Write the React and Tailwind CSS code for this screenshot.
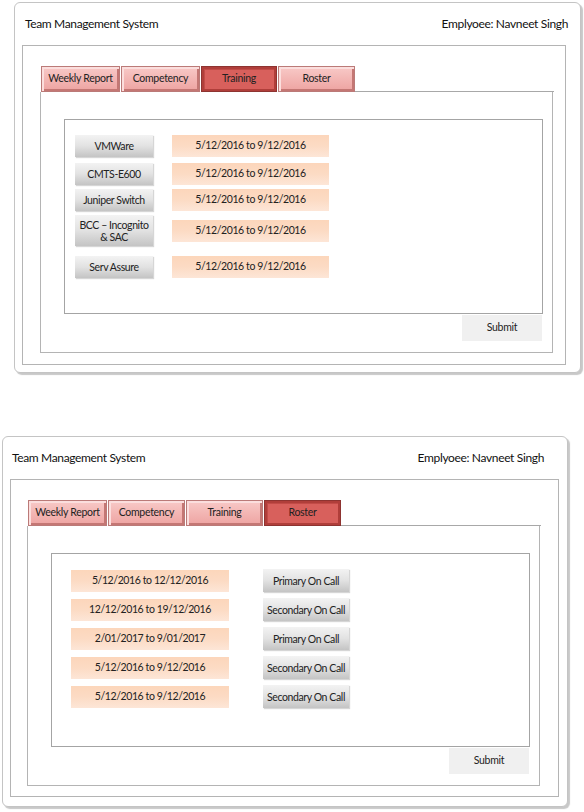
import React from 'react';

const TABS = ['Weekly Report', 'Competency', 'Training', 'Roster'];

const TRAINING = [
  { name: 'VMWare', dates: '5/12/2016 to 9/12/2016', mt: 'mt-[15px]', tall: false },
  { name: 'CMTS-E600', dates: '5/12/2016 to 9/12/2016', mt: 'mt-[6px]', tall: false },
  { name: 'Juniper Switch', dates: '5/12/2016 to 9/12/2016', mt: 'mt-[4px]', tall: false },
  { name: 'BCC – Incognito & SAC', dates: '5/12/2016 to 9/12/2016', mt: 'mt-[4px]', tall: true },
  { name: 'Serv Assure', dates: '5/12/2016 to 9/12/2016', mt: 'mt-[10px]', tall: false },
];

const ROSTER = [
  { dates: '5/12/2016 to 12/12/2016', role: 'Primary On Call' },
  { dates: '12/12/2016 to 19/12/2016', role: 'Secondary On Call' },
  { dates: '2/01/2017 to 9/01/2017', role: 'Primary On Call' },
  { dates: '5/12/2016 to 9/12/2016', role: 'Secondary On Call' },
  { dates: '5/12/2016 to 9/12/2016', role: 'Secondary On Call' },
];

const Tab = ({ label, active, width }) => (
  <div
    className={
      active
        ? `${width} h-[26px] flex items-center justify-center text-[10.5px] tracking-[-0.3px] text-[#222] border border-[#8e3431] bg-[#d8605c] shadow-[inset_0_0_0_2px_#b03e3a,inset_3px_3px_0_#c24b47]`
        : `${width} h-[26px] flex items-center justify-center text-[10.5px] tracking-[-0.3px] text-[#222] border border-[#bb7a78] bg-gradient-to-b from-[#f8c9c7] to-[#eda3a1] shadow-[inset_2px_2px_0_#fbdedd,inset_-2px_-2px_0_#c47774]`
    }
  >
    {label}
  </div>
);

const GrayBtn = ({ children, className }) => (
  <div
    className={`flex items-center justify-center text-center leading-[12px] text-[10.5px] tracking-[-0.4px] text-[#222] bg-gradient-to-b from-[#f3f3f3] via-[#e2e2e2] to-[#c4c4c4] shadow-[1px_1px_1px_#d6d6d6] ${className}`}
  >
    {children}
  </div>
);

const PeachBox = ({ children, className }) => (
  <div
    className={`flex items-center justify-center text-[10.5px] tracking-[-0.4px] text-[#222] bg-gradient-to-b from-[#fcd6bb] via-[#fcdbc4] to-[#fde6d7] ${className}`}
  >
    {children}
  </div>
);

const Header = ({ pl, pr }) => (
  <div className={`h-[42px] flex items-center justify-between text-[12px] tracking-[-0.35px] text-[#111] ${pl} ${pr}`}>
    <span>Team Management System</span>
    <span>Emplyoee: Navneet Singh</span>
  </div>
);

const Submit = () => (
  <div className="w-[80px] h-[26px] flex items-center justify-center bg-[#f0f0f0] text-[10.5px] tracking-[-0.3px] text-[#222]">
    Submit
  </div>
);

const TabRow = ({ active, widths }) => (
  <div className="flex items-end w-[514px]">
    <div className="flex gap-[1px] pl-[1px]">
      {TABS.map((t, i) => (
        <Tab key={t} label={t} active={t === active} width={widths[i]} />
      ))}
    </div>
    <div className="flex-1 border-b border-[#a8a8a8]" />
  </div>
);

const TrainingCard = () => (
  <div className="ml-[14px] mt-[2px] w-[567px] h-[371px] border border-[#c4c4c4] rounded-[6px] shadow-[2px_2px_1px_#c8c8c8] bg-white flex flex-col">
    <Header pl="pl-[10px]" pr="pr-[12px]" />
    <div className="ml-[7px] w-[544px] h-[320px] border border-[#b4b4b4] pt-[20px] pl-[17px]">
      <TabRow active="Training" widths={['w-[79px]', 'w-[79px]', 'w-[76px]', 'w-[77px]']} />
      <div className="w-[513px] h-[261px] border border-[#b4b4b4] border-t-0 pt-[27px] pl-[23px] flex flex-col">
        <div className="w-[479px] h-[195px] border border-[#a4a4a4] pl-[10px]">
          {TRAINING.map((r) => (
            <div key={r.name} className={`flex items-center gap-[19px] ${r.mt}`}>
              <GrayBtn className={r.tall ? 'w-[78px] h-[31px] px-[2px]' : 'w-[78px] h-[22px]'}>{r.name}</GrayBtn>
              <PeachBox className="w-[157px] h-[22px]">{r.dates}</PeachBox>
            </div>
          ))}
        </div>
        <div className="flex justify-end pr-[10px] mt-[1px]">
          <Submit />
        </div>
      </div>
    </div>
  </div>
);

const RosterCard = () => (
  <div className="ml-[2px] mt-[63px] w-[566px] h-[371px] border border-[#c4c4c4] rounded-[6px] shadow-[2px_2px_1px_#c8c8c8] bg-white flex flex-col">
    <Header pl="pl-[9px]" pr="pr-[23px]" />
    <div className="ml-[7px] w-[549px] h-[318px] border border-[#b4b4b4] pt-[20px] pl-[16px]">
      <TabRow active="Roster" widths={['w-[79px]', 'w-[77px]', 'w-[77px]', 'w-[77px]']} />
      <div className="w-[513px] h-[260px] border border-[#b4b4b4] border-t-0 pt-[27px] pl-[23px] flex flex-col">
        <div className="w-[479px] h-[194px] border border-[#a4a4a4] pt-[15px] pl-[19px] flex flex-col gap-[6px]">
          {ROSTER.map((r, i) => (
            <div key={i} className="flex items-center gap-[34px]">
              <PeachBox className="w-[158px] h-[22px]">{r.dates}</PeachBox>
              <GrayBtn className="w-[86px] h-[23px]">{r.role}</GrayBtn>
            </div>
          ))}
        </div>
        <div className="flex justify-end pr-[10px] mt-[1px]">
          <Submit />
        </div>
      </div>
    </div>
  </div>
);

export default function App() {
  return (
    <div className="w-[584px] h-[812px] bg-white overflow-hidden font-['Lato','Open_Sans',sans-serif]">
      <TrainingCard />
      <RosterCard />
    </div>
  );
}
